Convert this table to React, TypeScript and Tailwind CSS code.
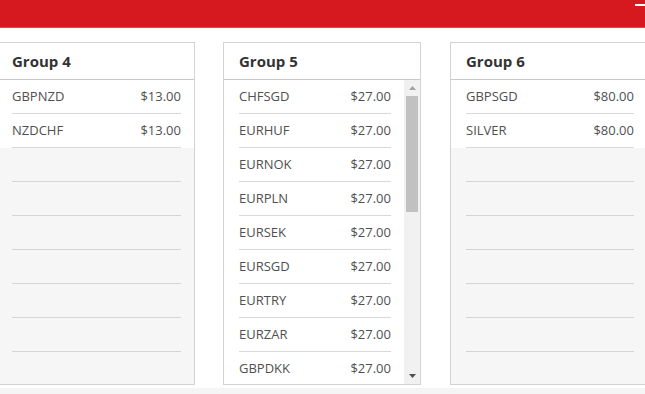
import React from 'react';

type Item = { name: string; price: string };

const group4: Item[] = [
  { name: 'GBPNZD', price: '$13.00' },
  { name: 'NZDCHF', price: '$13.00' },
];

const group5: Item[] = [
  { name: 'CHFSGD', price: '$27.00' },
  { name: 'EURHUF', price: '$27.00' },
  { name: 'EURNOK', price: '$27.00' },
  { name: 'EURPLN', price: '$27.00' },
  { name: 'EURSEK', price: '$27.00' },
  { name: 'EURSGD', price: '$27.00' },
  { name: 'EURTRY', price: '$27.00' },
  { name: 'EURZAR', price: '$27.00' },
  { name: 'GBPDKK', price: '$27.00' },
];

const group6: Item[] = [
  { name: 'GBPSGD', price: '$80.00' },
  { name: 'SILVER', price: '$80.00' },
];

const Row = ({ item }: { item: Item }) => (
  <div className="h-[34px] ml-[15px] mr-[13px] flex items-center justify-between border-b border-[#d9d9d9] text-[13px] text-[#505050] shrink-0">
    <span>{item.name}</span>
    <span>{item.price}</span>
  </div>
);

const EmptyRow = () => <div className="h-[34px] ml-[15px] mr-[13px] border-b border-[#d4d4d4] shrink-0" />;

const Scrollbar = () => (
  <div className="w-[16px] bg-[#f1f1f1] flex flex-col shrink-0">
    <div className="h-[16px] flex items-center justify-center">
      <svg width="7" height="4" viewBox="0 0 7 4">
        <path d="M0 4 L3.5 0 L7 4 Z" fill="#a3a3a3" />
      </svg>
    </div>
    <div className="px-[2px]">
      <div className="h-[116px] bg-[#c1c1c1]" />
    </div>
    <div className="flex-1" />
    <div className="h-[16px] flex items-center justify-center">
      <svg width="7" height="4" viewBox="0 0 7 4">
        <path d="M0 0 L7 0 L3.5 4 Z" fill="#505050" />
      </svg>
    </div>
  </div>
);

const Panel = ({
  title,
  items,
  scroll,
  className,
}: {
  title: string;
  items: Item[];
  scroll?: boolean;
  className?: string;
}) => (
  <div className={`h-[343px] border border-[#d3d3d3] bg-white flex flex-col shrink-0 overflow-hidden ${className ?? ''}`}>
    <div className="h-[37px] border-b border-[#c9c9c9] flex items-center px-[15px] text-[15px] font-bold text-[#333333] shrink-0">
      {title}
    </div>
    {scroll ? (
      <div className="flex flex-1 min-h-0">
        <div className="flex-1 flex flex-col overflow-hidden">
          {items.map((it) => (
            <Row key={it.name} item={it} />
          ))}
        </div>
        <Scrollbar />
      </div>
    ) : (
      <div className="flex-1 flex flex-col overflow-hidden">
        {items.map((it) => (
          <Row key={it.name} item={it} />
        ))}
        <div className="flex-1 bg-[#f6f6f6] flex flex-col overflow-hidden">
          {[0, 1, 2, 3, 4, 5, 6].map((i) => (
            <EmptyRow key={i} />
          ))}
        </div>
      </div>
    )}
  </div>
);

export default function App() {
  return (
    <div className="w-[645px] h-[394px] overflow-hidden bg-white" style={{ fontFamily: '"Open Sans", "Noto Sans", sans-serif' }}>
      <div className="h-[28px] bg-[#d6181f] border-b border-[#e24a50] flex justify-end items-start pt-[4px]">
        <div className="w-[10px] h-[2px] bg-white" />
      </div>
      <div className="flex mt-[14px] ml-[-4px]">
        <Panel title="Group 4" items={group4} className="w-[199px]" />
        <Panel title="Group 5" items={group5} scroll className="w-[198px] ml-[28px]" />
        <Panel title="Group 6" items={group6} className="w-[198px] ml-[29px]" />
      </div>
      <div className="mt-[3px] h-[10px] bg-[#f5f5f5]" />
    </div>
  );
}
